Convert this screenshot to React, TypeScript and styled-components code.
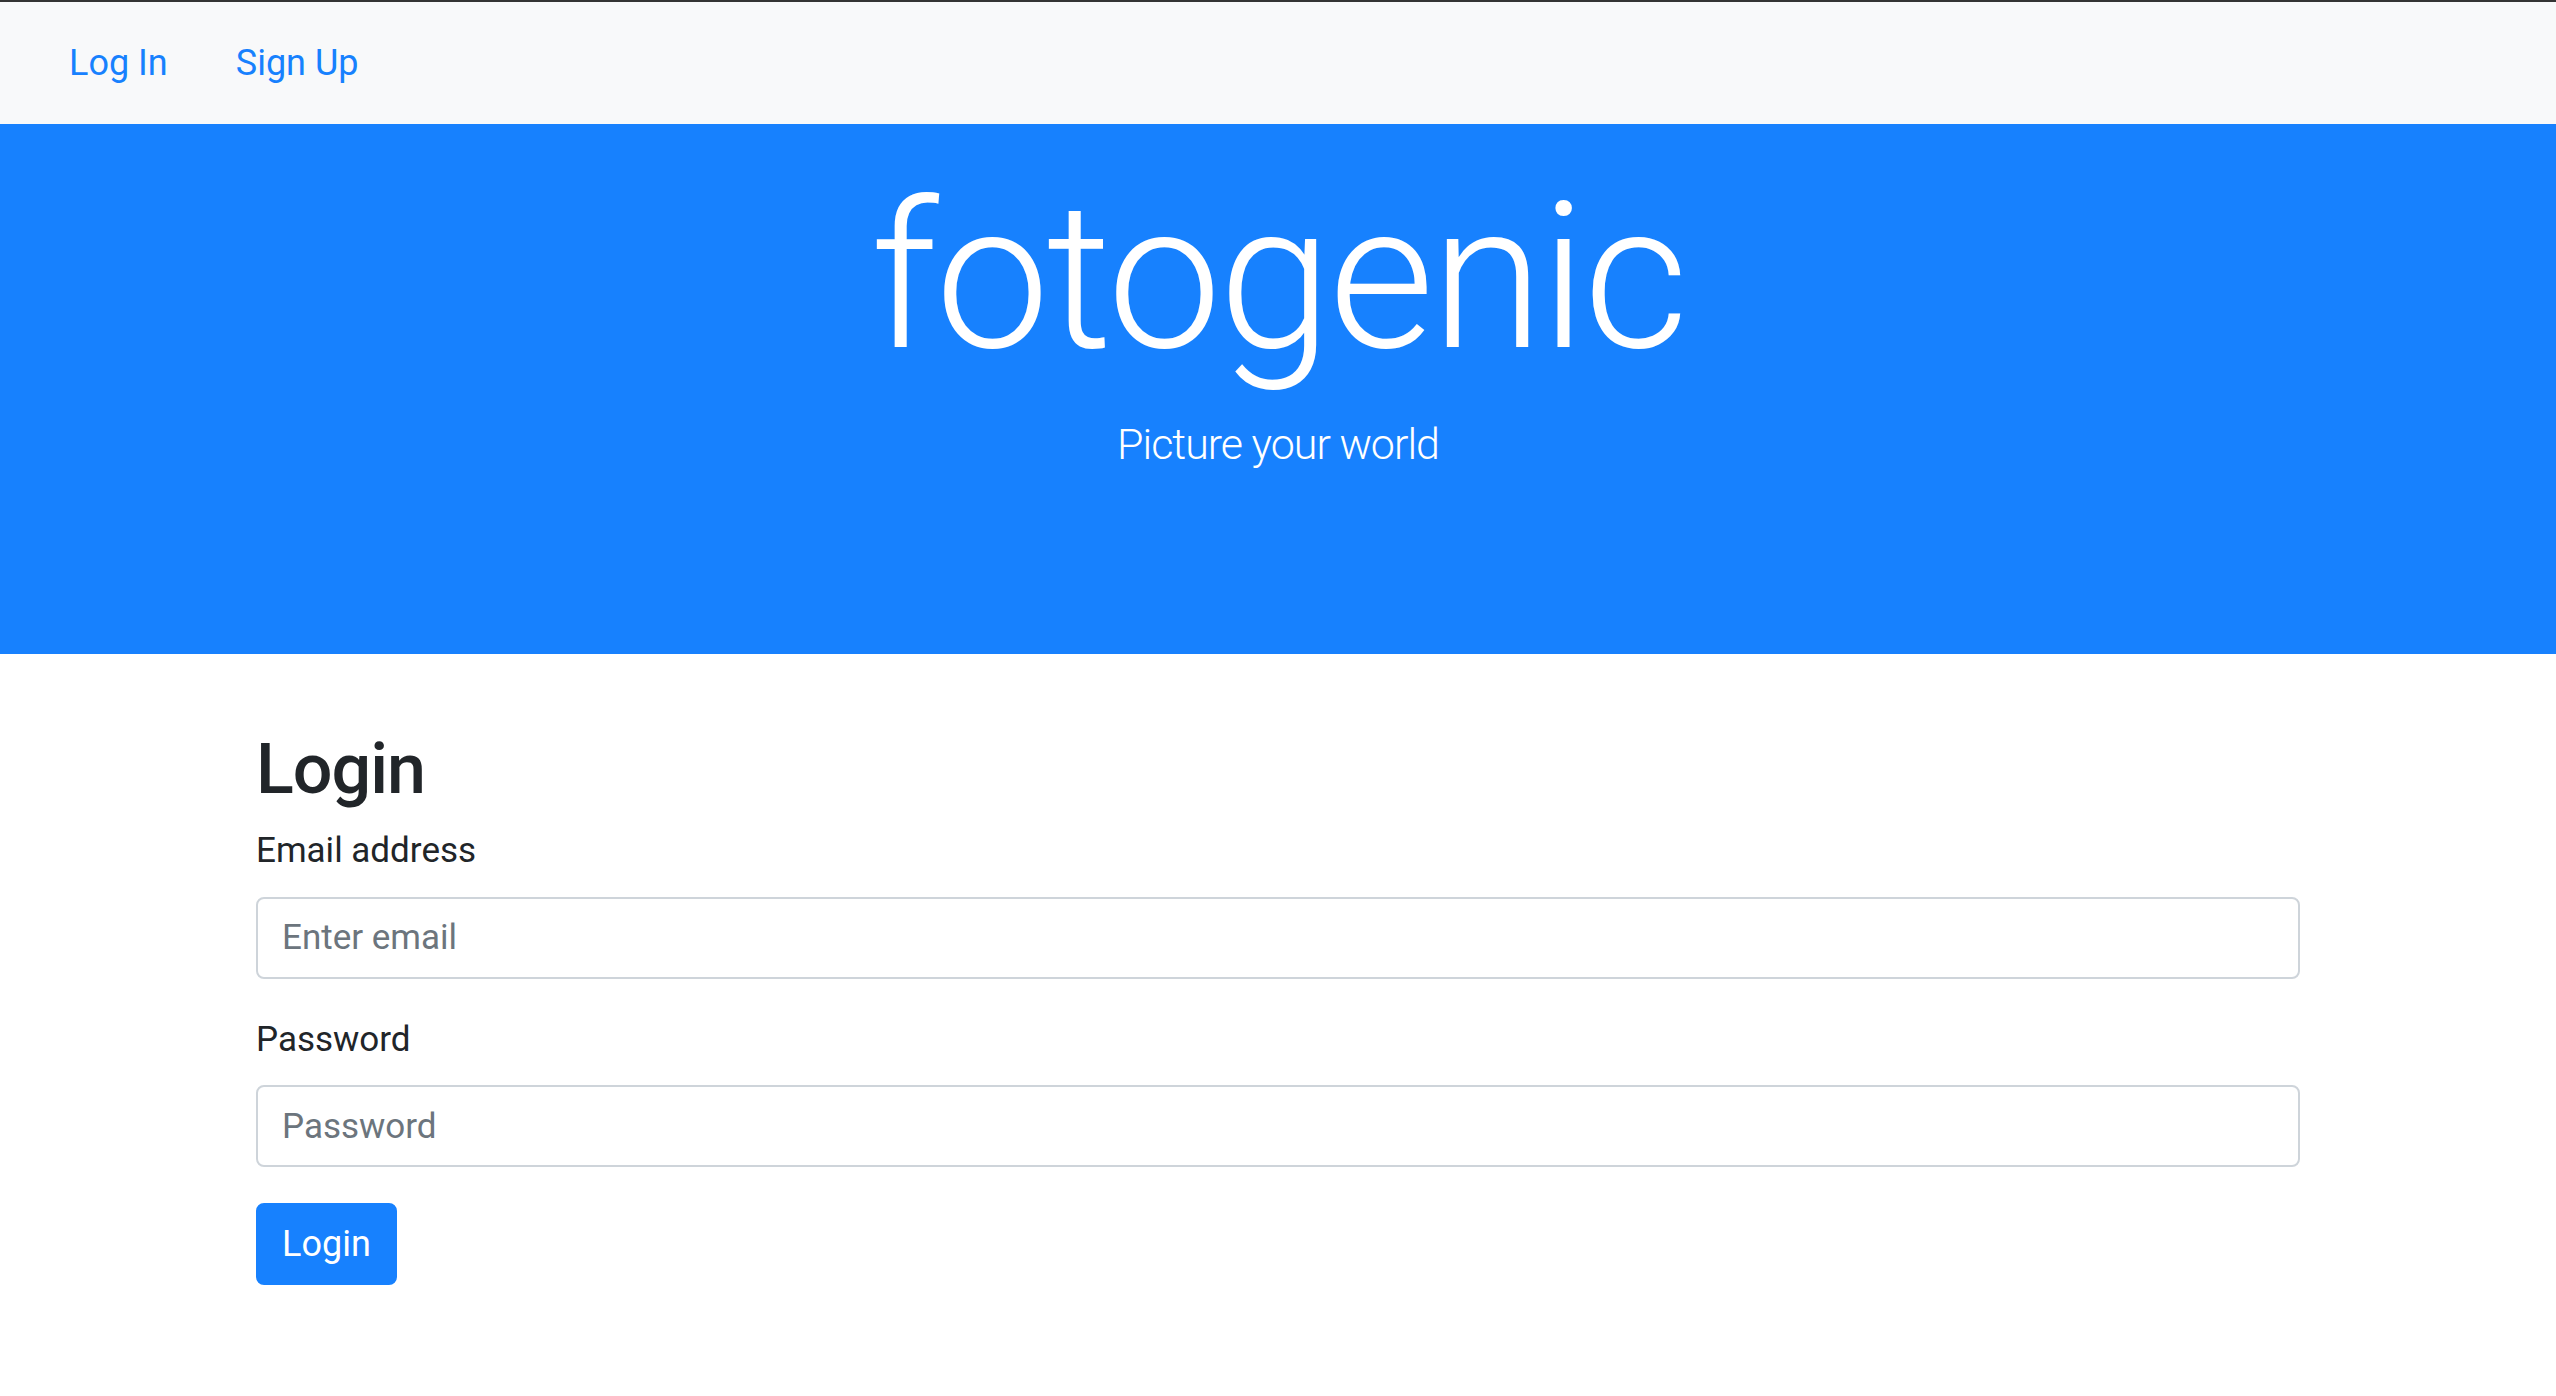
import React from "react";
import styled, { createGlobalStyle } from "styled-components";

const GlobalStyle = createGlobalStyle`
  html, body {
    margin: 0;
    padding: 0;
    background: #ffffff;
  }
  body {
    font-family: Roboto, "Noto Sans", "Liberation Sans", sans-serif;
    color: #212529;
  }
  * { box-sizing: border-box; }
`;

const primary = "#1781fe";

const Page = styled.div`
  min-height: 1396px;
  display: flex;
  flex-direction: column;
  background: #ffffff;
`;

const NavBar = styled.nav`
  height: 124px;
  border-top: 2px solid #343434;
  background: #f8f9fa;
  display: flex;
  align-items: center;
  padding-left: 69px;
  gap: 68px;
`;

const NavLink = styled.a`
  font-size: 36px;
  line-height: 1.5;
  color: ${primary};
  text-decoration: none;
  cursor: pointer;
`;

const Hero = styled.header`
  height: 530px;
  background: ${primary};
  color: #ffffff;
  display: flex;
  flex-direction: column;
  align-items: center;
  padding-top: 32px;
`;

const Title = styled.h1`
  margin: 0;
  font-size: 204px;
  font-weight: 300;
  line-height: 1.2;
  letter-spacing: -3px;
`;

const Tagline = styled.p`
  margin: 11px 0 0;
  font-size: 43px;
  font-weight: 300;
  line-height: 1.5;
  letter-spacing: -1px;
`;

const Container = styled.main`
  width: 100%;
  max-width: 2044px;
  margin: 0 auto;
  padding-top: 73px;
`;

const Heading = styled.h2`
  margin: 0 0 14px;
  font-size: 70px;
  font-weight: 500;
  line-height: 1.2;
  letter-spacing: -1px;
  color: #212529;
`;

const Form = styled.form`
  display: flex;
  flex-direction: column;
`;

const FormGroup = styled.div`
  display: flex;
  flex-direction: column;
  margin-bottom: 35px;
`;

const Label = styled.label`
  font-size: 35px;
  line-height: 1.5;
  margin-bottom: 19px;
  color: #212529;
`;

const Input = styled.input`
  height: 82px;
  width: 100%;
  border: 2px solid #ced4da;
  border-radius: 8px;
  padding: 0 24px;
  font-family: inherit;
  font-size: 35px;
  color: #495057;
  background: #ffffff;
  outline: none;
  &::placeholder {
    color: #6c757d;
    opacity: 1;
  }
`;

const Button = styled.button`
  margin-top: 1px;
  align-self: flex-start;
  height: 82px;
  padding: 0 24px;
  border: 2px solid ${primary};
  border-radius: 8px;
  background: ${primary};
  color: #ffffff;
  font-family: inherit;
  font-size: 36px;
  font-weight: 400;
  cursor: pointer;
`;

export default function App() {
  return (
    <>
      <GlobalStyle />
      <Page>
        <NavBar>
          <NavLink>Log In</NavLink>
          <NavLink>Sign Up</NavLink>
        </NavBar>
        <Hero>
          <Title>fotogenic</Title>
          <Tagline>Picture your world</Tagline>
        </Hero>
        <Container>
          <Heading>Login</Heading>
          <Form onSubmit={(e) => e.preventDefault()}>
            <FormGroup>
              <Label htmlFor="email">Email address</Label>
              <Input id="email" type="email" placeholder="Enter email" />
            </FormGroup>
            <FormGroup>
              <Label htmlFor="password">Password</Label>
              <Input id="password" type="password" placeholder="Password" />
            </FormGroup>
            <Button type="submit">Login</Button>
          </Form>
        </Container>
      </Page>
    </>
  );
}
